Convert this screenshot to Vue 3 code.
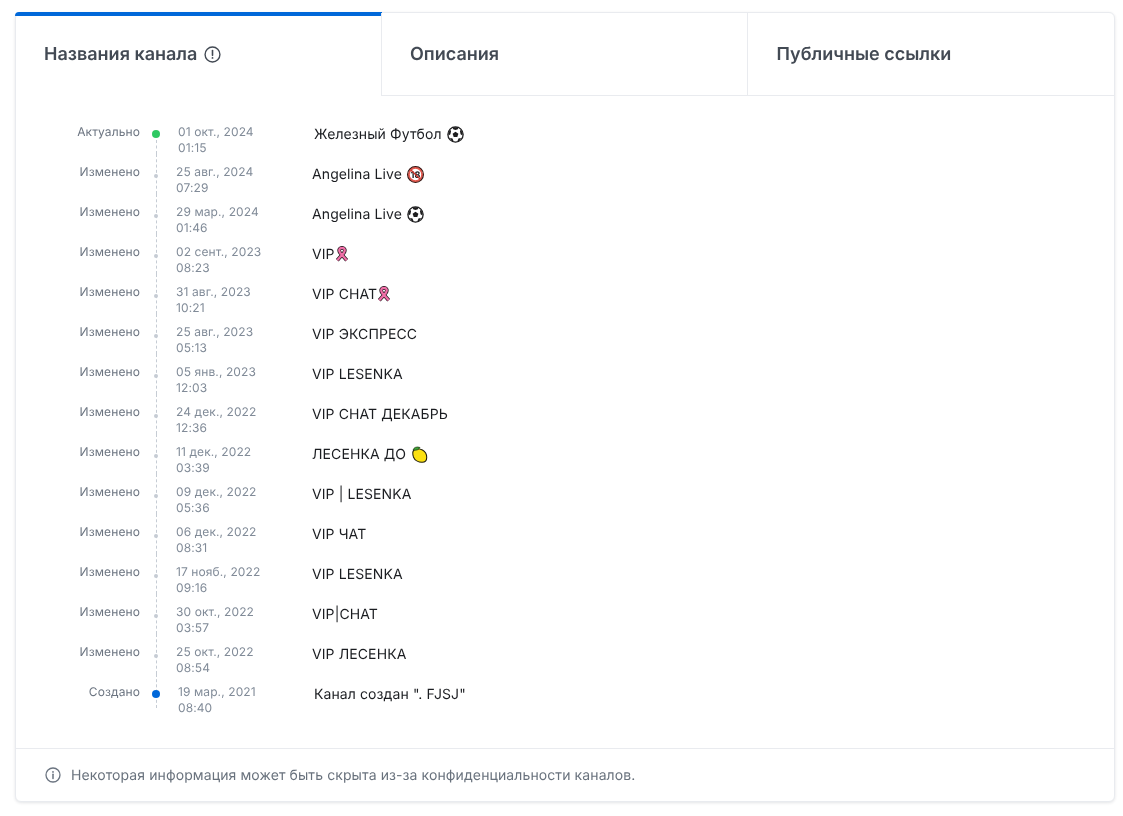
<template>
  <div class="page">
    <div class="card">
      <div class="tabs">
        <div
          v-for="tab in tabs"
          :key="tab.label"
          class="tab"
          :class="{ active: tab.active }"
        >
          <span>{{ tab.label }}</span>
          <svg v-if="tab.active" class="tab-icon" viewBox="0 0 16 16" fill="none">
            <circle cx="8" cy="8" r="7" stroke="#434a54" stroke-width="1.3" />
            <path d="M8 4.2v4.6" stroke="#434a54" stroke-width="1.5" stroke-linecap="round" />
            <circle cx="8" cy="11.2" r=".9" fill="#434a54" />
          </svg>
        </div>
      </div>

      <div class="timeline">
        <div
          v-for="(item, i) in items"
          :key="i"
          class="row"
          :class="item.kind"
        >
          <div class="status">{{ item.status }}</div>
          <div class="axis">
            <span class="dot"></span>
          </div>
          <div class="date">{{ item.date }}<br />{{ item.time }}</div>
          <div class="name">
            <span>{{ item.name }}</span>
            <svg v-if="item.icon === 'ball'" class="emoji spaced" viewBox="0 0 16 16">
              <circle cx="8" cy="8" r="7.2" fill="#fff" stroke="#1d1d1f" stroke-width="1.2" />
              <path d="M8 5.300l2.700 2-1 3.100H6.300l-1-3.100z" fill="#1d1d1f" />
              <path d="M5.400 1.200h5.200L10.200 3 8 3.800 5.800 3zM13 3.300l1.800 3.400-.3 2.300-1.700-1.300-.6-2.800zM3 3.300L1.200 6.700l.3 2.300 1.700-1.300.6-2.800zM2.600 11.600l2.400-.1 1.100 2.400-.5 1.100zM13.400 11.600l-2.400-.1-1.100 2.400.5 1.100z" fill="#1d1d1f" />
            </svg>
            <svg v-else-if="item.icon === 'adult'" class="emoji spaced" viewBox="0 0 16 16">
              <circle cx="8" cy="8" r="6.300" fill="#fff" stroke="#e2574c" stroke-width="1.800" />
              <circle cx="8" cy="8" r="7.500" fill="none" stroke="#33110e" stroke-width="1" />
              <text x="8" y="11" text-anchor="middle" class="adult-text">18</text>
              <path d="M3.700 3.700l8.600 8.600" stroke="#c9352b" stroke-width="1.300" />
            </svg>
            <svg v-else-if="item.icon === 'ribbon'" class="emoji ribbon" viewBox="0 0 14 16" fill="none">
              <path d="M2.300 14.200L8.900 6.800C10.600 4.600 9.800 1.800 7 1.800S3.400 4.600 5.100 6.800l6.600 7.400" stroke="#2a1a22" stroke-width="3.700" stroke-linejoin="round" />
              <path d="M2.300 14.200L8.900 6.800C10.600 4.600 9.800 1.800 7 1.800S3.400 4.600 5.100 6.800l6.600 7.400" stroke="#f06fa8" stroke-width="2.300" stroke-linejoin="round" />
            </svg>
            <svg v-else-if="item.icon === 'lemon'" class="emoji spaced" viewBox="0 0 16 16">
              <path d="M2.600 4C4.400 2.500 8.200 2.600 10.800 3.800c2.400 1.300 4 4.200 4 7 0 2.800-1.800 4.500-4.400 4.500-3.400 0-7-2-8.100-5C1.600 8 1.300 5.300 2.600 4z" fill="#fbe011" stroke="#1f1c08" stroke-width="1" />
              <path d="M2 3.600C2.600 1.400 5.400.300 8.400 1.400 7.800 3.400 4.600 4.600 2 3.600z" fill="#3fa535" stroke="#1f3a18" stroke-width=".7" />
            </svg>
          </div>
        </div>
      </div>

      <div class="footer">
        <svg class="info" viewBox="0 0 16 16" fill="none">
          <circle cx="8" cy="8" r="7" stroke="#6b7480" stroke-width="1.300" />
          <circle cx="8" cy="4.900" r=".9" fill="#6b7480" />
          <path d="M8 7.300v4.200" stroke="#6b7480" stroke-width="1.500" stroke-linecap="round" />
        </svg>
        <span>Некоторая информация может быть скрыта из-за конфиденциальности каналов.</span>
      </div>
    </div>
  </div>
</template>

<script setup>
const tabs = [
  { label: 'Названия канала', active: true },
  { label: 'Описания' },
  { label: 'Публичные ссылки' }
]

const items = [
  { kind: 'current', status: 'Актуально', date: '01 окт., 2024', time: '01:15', name: 'Железный Футбол', icon: 'ball' },
  { kind: 'changed', status: 'Изменено', date: '25 авг., 2024', time: '07:29', name: 'Angelina Live', icon: 'adult' },
  { kind: 'changed', status: 'Изменено', date: '29 мар., 2024', time: '01:46', name: 'Angelina Live', icon: 'ball' },
  { kind: 'changed', status: 'Изменено', date: '02 сент., 2023', time: '08:23', name: 'VIP', icon: 'ribbon' },
  { kind: 'changed', status: 'Изменено', date: '31 авг., 2023', time: '10:21', name: 'VIP CHAT', icon: 'ribbon' },
  { kind: 'changed', status: 'Изменено', date: '25 авг., 2023', time: '05:13', name: 'VIP ЭКСПРЕСС' },
  { kind: 'changed', status: 'Изменено', date: '05 янв., 2023', time: '12:03', name: 'VIP LESENKA' },
  { kind: 'changed', status: 'Изменено', date: '24 дек., 2022', time: '12:36', name: 'VIP CHAT ДЕКАБРЬ' },
  { kind: 'changed', status: 'Изменено', date: '11 дек., 2022', time: '03:39', name: 'ЛЕСЕНКА ДО', icon: 'lemon' },
  { kind: 'changed', status: 'Изменено', date: '09 дек., 2022', time: '05:36', name: 'VIP | LESENKA' },
  { kind: 'changed', status: 'Изменено', date: '06 дек., 2022', time: '08:31', name: 'VIP ЧАТ' },
  { kind: 'changed', status: 'Изменено', date: '17 нояб., 2022', time: '09:16', name: 'VIP LESENKA' },
  { kind: 'changed', status: 'Изменено', date: '30 окт., 2022', time: '03:57', name: 'VIP|CHAT' },
  { kind: 'changed', status: 'Изменено', date: '25 окт., 2022', time: '08:54', name: 'VIP ЛЕСЕНКА' },
  { kind: 'created', status: 'Создано', date: '19 мар., 2021', time: '08:40', name: 'Канал создан ". FJSJ"' }
]
</script>

<style scoped>
.page {
  padding: 12px 8px 14px 15px;
  font-family: Inter, "Liberation Sans", sans-serif;
  text-rendering: geometricPrecision;
}

.card {
  width: 1100px;
  height: 790px;
  box-sizing: border-box;
  display: flex;
  flex-direction: column;
  background: #fff;
  border: 1px solid #e9ebef;
  border-radius: 6px;
  box-shadow: 0 1px 3px rgba(30, 40, 60, 0.12);
  will-change: transform;
}

.tabs {
  display: flex;
  height: 83px;
  flex-shrink: 0;
}

.tab {
  box-sizing: border-box;
  display: flex;
  align-items: center;
  gap: 7px;
  width: 366px;
  padding-left: 28px;
  font-size: 18px;
  font-weight: 600;
  color: #434a54;
  border-left: 1px solid #e9ebef;
  border-bottom: 1px solid #e9ebef;
}

.tab:last-child {
  flex: 1;
  padding-left: 28.5px;
}

.tab.active {
  width: 367px;
  height: 84px;
  margin: -1px -1px 0 -1px;
  padding: 0 0 4px 29px;
  border: 0;
  border-top: 4px solid #0068d9;
  border-radius: 4px 0 0 0;
}

.tab-icon {
  width: 17px;
  height: 17px;
}

.timeline {
  flex: 1;
  padding-top: 18px;
}

.row {
  display: flex;
  height: 40px;
}

.status {
  width: 124px;
  margin-top: 10px;
  font-size: 12px;
  line-height: 16px;
  letter-spacing: 0.1px;
  text-align: right;
  color: #6b7480;
}

.axis {
  position: relative;
  width: 36px;
  flex-shrink: 0;
}

.axis::before {
  content: "";
  position: absolute;
  left: 15.5px;
  top: 0;
  bottom: 0;
  border-left: 1px dashed #c6ccd4;
}

.current .axis::before {
  top: 26px;
}

.created .axis::before {
  bottom: 6px;
}

.dot {
  position: absolute;
  left: 14px;
  top: 20px;
  width: 4px;
  height: 4px;
  border-radius: 50%;
  background: #c6ccd4;
}

.current .dot,
.created .dot {
  left: 12px;
  top: 16px;
  width: 8px;
  height: 8px;
}

.current .dot {
  background: #2fc862;
}

.created .dot {
  background: #0068d9;
}

.date {
  width: 136px;
  flex-shrink: 0;
  margin-top: 10px;
  font-size: 12px;
  line-height: 16px;
  letter-spacing: 0.1px;
  color: #818b98;
}

.name {
  display: flex;
  align-items: center;
  height: 40px;
  font-size: 14px;
  letter-spacing: 0.1px;
  color: #1b1d21;
}

.current .date,
.created .date {
  margin-left: 2px;
}

.emoji {
  width: 17px;
  height: 17px;
  flex-shrink: 0;
}

.emoji.ribbon {
  width: 14px;
  height: 16px;
}

.emoji.spaced {
  margin-left: 5px;
}

.adult-text {
  font-family: Inter, sans-serif;
  font-size: 8.5px;
  font-weight: 700;
  fill: #1d1d1f;
}

.footer {
  height: 53px;
  flex-shrink: 0;
  box-sizing: border-box;
  display: flex;
  align-items: center;
  gap: 10px;
  padding-left: 29px;
  border-top: 1px solid #e9ebef;
  font-size: 14px;
  letter-spacing: 0.1px;
  color: #69727d;
}

.info {
  width: 16px;
  height: 16px;
}
</style>
